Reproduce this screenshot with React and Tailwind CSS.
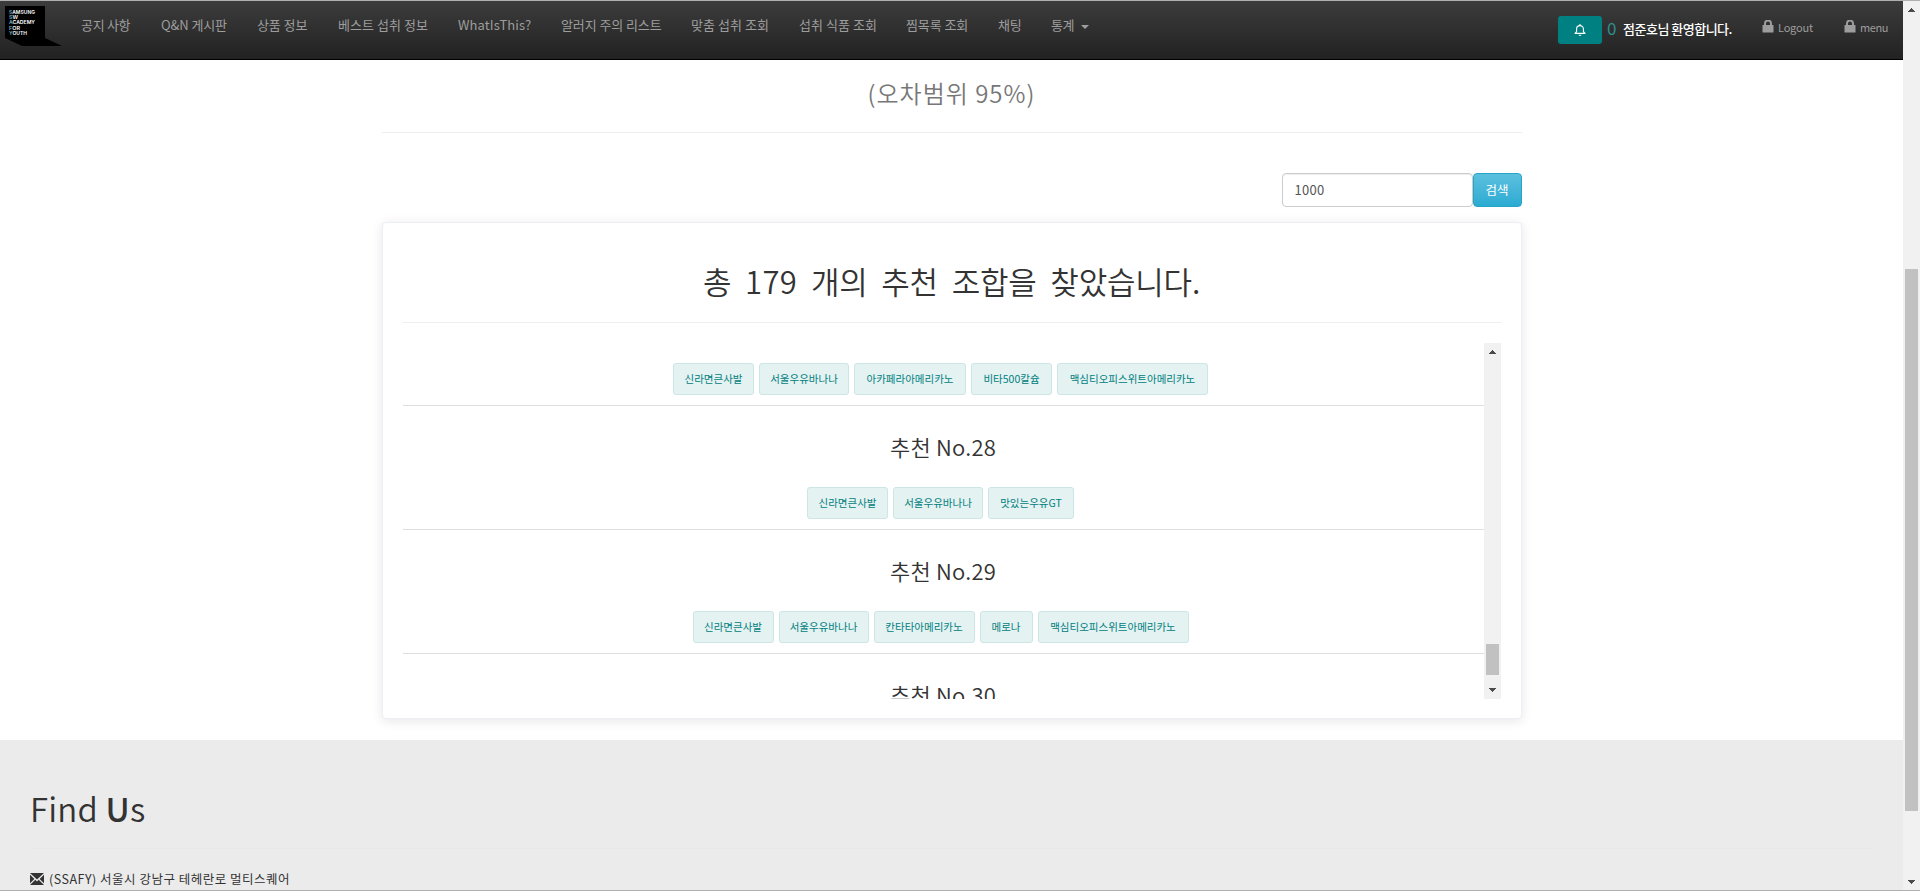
const NAV = [
  ['공지 사항', 'w-[80px]', 'tracking-[-0.3px]'],
  ['Q&N 게시판', 'w-[96px]', 'tracking-[-0.1px]'],
  ['상품 정보', 'w-[81px]', 'tracking-[-0.1px]'],
  ['베스트 섭취 정보', 'w-[120px]', 'tracking-[0.05px]'],
  ['WhatIsThis?', 'w-[103px]', 'tracking-[0.1px]'],
  ['알러지 주의 리스트', 'w-[130px]', 'tracking-[-0.1px]'],
  ['맞춤 섭취 조회', 'w-[108px]', 'tracking-[0.05px]'],
  ['섭취 식품 조회', 'w-[107px]', 'tracking-[0.05px]'],
  ['찜목록 조회', 'w-[92px]', 'tracking-[-0.1px]'],
  ['채팅', 'w-[53px]', 'tracking-[-0.1px]'],
];

const RAMEN = ['신라면큰사발', 'w-[81px]'];
const BANANA = ['서울우유바나나', 'w-[90px]'];
const MAXIM = ['맥심티오피스위트아메리카노', 'w-[151px]'];

const SETS = [
  { chips: [RAMEN, BANANA, ['아카페라아메리카노', 'w-[112px]'], ['비타500칼슘', 'w-[81px]'], MAXIM] },
  { no: 28, chips: [RAMEN, BANANA, ['맛있는우유GT', 'w-[86px]']] },
  { no: 29, chips: [RAMEN, BANANA, ['칸타타아메리카노', 'w-[101px]'], ['메로나', 'w-[53px]'], MAXIM] },
  { no: 30, chips: [] },
];

function Lock() {
  return (
    <svg width="12" height="13" viewBox="0 0 12 13" className="shrink-0">
      <path d="M3 6V3.6a3 3 0 0 1 6 0V6" fill="none" stroke="#9d9d9d" strokeWidth="2" />
      <rect x="0.5" y="5" width="11" height="7.5" rx="0.6" fill="#9d9d9d" />
    </svg>
  );
}

function Arrow({ down }) {
  return (
    <svg width="7" height="4" viewBox="0 0 7 4" className="shrink-0" shapeRendering="crispEdges">
      <path d={down ? 'M0 0h7L3.5 4z' : 'M0 4h7L3.5 0z'} fill="#4b4b4b" />
    </svg>
  );
}

function Logo() {
  const lines = [
    ['S', 'AMSUNG', 26],
    ['S', 'W', 9],
    ['A', 'CADEMY', 26],
    ['F', 'OR', 11],
    ['Y', 'OUTH', 18],
  ];
  return (
    <svg width="58" height="41" viewBox="0 0 58 41" className="shrink-0">
      <path d="M0 0h40v32l17 8H17L0 32z" fill="#000" />
      {lines.map(([a, rest, w], i) => (
        <text
          key={i}
          x="4"
          y={7.5 + i * 5.4}
          fontSize="5.4"
          fontWeight="600"
          fontFamily="Inter, sans-serif"
          fill="#fff"
          textLength={w}
          lengthAdjust="spacingAndGlyphs"
        >
          <tspan fill="#6fb1d0">{a}</tspan>
          {rest}
        </text>
      ))}
    </svg>
  );
}

function Navbar() {
  return (
    <nav className="flex h-[59px] shrink-0 items-start border-b border-black bg-gradient-to-b from-[#3c3c3c] to-[#222222] text-[13px] text-[#9d9d9d]">
      <div className="w-[81px] shrink-0 pt-[5px] pl-[5px]">
        <Logo />
      </div>
      <div className="flex pt-[14px] leading-5 whitespace-nowrap">
        {NAV.map(([label, w, tracking]) => (
          <a key={label} className={`${w} ${tracking} block shrink-0`}>
            {label}
          </a>
        ))}
        <a className="flex items-center tracking-[-0.4px]">
          통계
          <svg width="8" height="4" viewBox="0 0 8 4" className="mt-[3px] ml-[7px]">
            <path d="M0 0h8L4 4z" fill="#9d9d9d" />
          </svg>
        </a>
      </div>
      <div className="ml-auto flex items-start pr-[16px] whitespace-nowrap">
        <button className="mt-[15px] flex h-7 w-11 items-center justify-center rounded-[3px] bg-[#008080]">
          <svg width="12" height="12" viewBox="0 0 12 12" fill="none" stroke="#fff" strokeWidth="1.1">
            <path d="M1 9.4h10L9.4 7.6V5a3.4 3.4 0 0 0-6.8 0v2.6z" strokeLinejoin="round" />
            <path d="M6 0v1.5M4.8 11.2h2.4" />
          </svg>
        </button>
        <span className="mt-[15px] ml-[5px] w-[16px] text-[17px] leading-6 text-[#2f8f8f]">0</span>
        <span className="mt-[18px] w-[139px] text-[13px] leading-5 font-medium tracking-[-0.5px] text-white">
          점준호님 환영합니다.
        </span>
        <a className="mt-[19px] flex w-[82px] gap-[4px] text-[11px] leading-[15px] tracking-[-0.2px]">
          <Lock />
          Logout
        </a>
        <a className="mt-[19px] flex w-[43px] gap-[4px] text-[11px] leading-[15px] tracking-[-0.4px]">
          <Lock />
          menu
        </a>
      </div>
    </nav>
  );
}

function ComboSet({ no, chips }) {
  return (
    <div className="flex w-full shrink-0 flex-col items-center border-b border-[#dcdfe2] pb-[10px]">
      {no ? (
        <h3 className="mt-[26px] mb-[26px] h-[29px] text-[22px] leading-[29px] font-[350] tracking-[0.2px] text-[#333]">
          추천 No.{no}
        </h3>
      ) : (
        <div className="h-[20px]" />
      )}
      <div className="flex h-8 gap-[5px] pr-[5px]">
        {chips.map(([label, w]) => (
          <span
            key={label}
            className={`${w} flex h-8 shrink-0 items-center justify-center rounded-[3px] border border-[#cce5e5] bg-[#e5f2f2] text-[10.5px] whitespace-nowrap text-[#008080]`}
          >
            {label}
          </span>
        ))}
      </div>
    </div>
  );
}

export default function App() {
  return (
    <div className="flex h-[891px] w-[1920px] flex-col overflow-hidden border-y border-[#b0b0b0] bg-white font-['Noto_Sans_CJK_KR','Noto_Sans',sans-serif] font-normal text-[#333]">
      <div className="flex min-h-0 flex-1">
        <div className="flex w-[1903px] flex-col overflow-hidden">
          <Navbar />
          <main className="mx-auto flex w-[1140px] shrink-0 flex-col">
            <h2 className="mt-[17px] h-[32px] text-center text-[24px] leading-[32px] font-[350] tracking-[1px] text-[#777]">
              (오차범위 95%)
            </h2>
            <hr className="mt-[23px] border-[#eeeeee]" />
            <div className="mt-[40px] flex h-[34px] justify-end">
              <input
                className="h-[34px] w-[191px] rounded-[4px] border border-[#ccc] px-[12px] pb-[2px] text-[13px] tracking-[0.3px] text-[#555] shadow-[inset_0_1px_1px_rgba(0,0,0,0.075)]"
                defaultValue="1000"
              />
              <button className="h-[34px] w-[49px] rounded-[4px] border border-[#28a4c9] bg-gradient-to-b from-[#5bc0de] to-[#2aabd2] text-[12.5px] text-white">
                검색
              </button>
            </div>
            <section className="mt-[15px] flex h-[497px] flex-col rounded-[4px] border border-[#ebeef5] bg-white pr-[20px] pl-[20px] shadow-[0_2px_12px_0_rgba(0,0,0,0.1)]">
              <h1 className="mt-[36px] h-[44px] text-center text-[31px] leading-[44px] font-[350] tracking-[-0.2px] whitespace-nowrap [word-spacing:7px]">
                총 <span className="tracking-[0.4px]">179</span> 개의 추천 조합을 찾았습니다.
              </h1>
              <hr className="mt-[19px] border-[#eeeeee]" />
              <div className="mt-[20px] flex h-[356px]">
                <div className="flex flex-1 flex-col overflow-hidden">
                  {SETS.map((s, i) => (
                    <ComboSet key={i} {...s} />
                  ))}
                </div>
                <div className="flex w-[17px] flex-col items-center bg-[#f1f1f1] pt-[7px] pb-[7px]">
                  <Arrow />
                  <div className="mt-auto mb-[13px] h-[31px] w-[13px] bg-[#c1c1c1]" />
                  <Arrow down />
                </div>
              </div>
            </section>
          </main>
          <footer className="mt-[21px] h-[151px] shrink-0 bg-[#ebebeb] px-[30px]">
            <h1 className="mt-[44px] h-[48px] text-[33px] leading-[48px] font-[350] tracking-[0.2px]">
              Find <span className="font-medium">U</span>s
            </h1>
            <hr className="mt-[16px] border-[#e8e8e8]" />
            <p className="mt-[20px] flex items-center text-[12.5px] leading-5 tracking-[0.5px] whitespace-nowrap">
              <svg width="14" height="12" viewBox="0 0 14 12" className="mr-[5px]">
                <path d="M0 0h14L7 6.6zM0 1.8L4.4 6 0 10.2zM14 1.8L9.6 6l4.4 4.2zM0 12l5.3-5.2L7 8.4l1.7-1.6L14 12z" fill="#333" />
              </svg>
              (SSAFY) 서울시 강남구 테헤란로 멀티스퀘어
            </p>
          </footer>
        </div>
        <div className="flex w-[17px] flex-col items-center bg-[#f1f1f1] pt-[7px] pb-[6px]">
          <Arrow />
          <div className="mt-[257px] h-[542px] w-[13px] bg-[#c1c1c1]" />
          <div className="mt-auto flex">
            <Arrow down />
          </div>
        </div>
      </div>
    </div>
  );
}
